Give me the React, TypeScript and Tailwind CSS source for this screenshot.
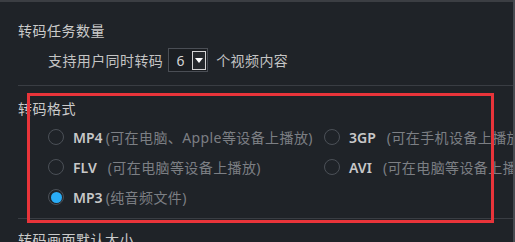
import React from "react";

const font = "font-['Noto_Sans','Noto_Sans_CJK_SC',sans-serif]";

type Opt = { name: string; desc: string; checked?: boolean; gap?: boolean };

const options: Opt[] = [
  { name: "MP4", desc: "(可在电脑、Apple等设备上播放)" },
  { name: "3GP", desc: "(可在手机设备上播放)", gap: true },
  { name: "FLV", desc: "(可在电脑等设备上播放)", gap: true },
  { name: "AVI", desc: "(可在电脑等设备上播放)", gap: true },
  { name: "MP3", desc: "(纯音频文件)", checked: true },
];

const Radio = ({ checked }: { checked?: boolean }) => (
  <span className="w-[16px] h-[16px] rounded-full border-[1.5px] border-[#4b5057] flex items-center justify-center shrink-0">
    {checked && <span className="w-[11px] h-[11px] rounded-full bg-[#29acf6]" />}
  </span>
);

const App = () => {
  return (
    <div className={`relative w-[515px] h-[242px] overflow-hidden bg-[#1f2328] flex ${font}`}>
      <div className="flex-1 min-w-0 border-t-2 border-[#3b3e43] pl-[18px] overflow-hidden whitespace-nowrap">
        <div className="mt-[19px] h-[20px] leading-[20px] text-[14px] tracking-[0.5px] text-[#cbcbcb]">
          转码任务数量
        </div>
        <div className="mt-[7px] h-[24px] ml-[30px] flex items-center text-[14px] tracking-[0.4px] text-[#c4c4c4]">
          <span>支持用户同时转码</span>
          <div className="ml-[5px] w-[40px] h-[24px] border border-[#4a4e55] bg-[#1b1e22] flex items-center">
            <span className="w-[23px] text-center text-[14px] text-[#d6d6d6]">6</span>
            <span className="w-[14px] h-[19px] border border-[#d4d4d4] bg-[#25282c] flex items-center justify-center">
              <span className="w-0 h-0 border-l-[4px] border-r-[4px] border-t-[5px] border-l-transparent border-r-transparent border-t-white" />
            </span>
          </div>
          <span className="ml-[8px]">个视频内容</span>
        </div>
        <div className="mt-[13px] h-px bg-[#393d43]" />
        <div className="mt-[13px] h-[20px] leading-[20px] text-[14px] tracking-[0.5px] text-[#cbcbcb]">
          转码格式
        </div>
        <div className="mt-[3px] ml-[30px] grid grid-cols-[276px_auto] auto-rows-[30px]">
          {options.map((o) => (
            <div key={o.name} className="flex items-center">
              <Radio checked={o.checked} />
              <span className="ml-[9px] text-[14px] font-semibold text-[#c8c8c8]">{o.name}</span>
              <span className={`${o.gap ? "ml-[11px]" : "ml-[3px]"} text-[14px] tracking-[0.4px] text-[#7c7f84]`}>
                {o.desc}
              </span>
            </div>
          ))}
        </div>
        <div className="mt-[6px] h-px bg-[#393d43]" />
        <div className="mt-[11px] h-[20px] leading-[20px] text-[14px] tracking-[0.5px] text-[#cbcbcb]">
          转码画面默认大小
        </div>
      </div>
      <div className="w-[2px] bg-[#464a50]" />
      <div className="absolute left-[27px] top-[93px] w-[467px] h-[130px] border-[3px] border-[#e8343a]" />
    </div>
  );
};

export default App;
